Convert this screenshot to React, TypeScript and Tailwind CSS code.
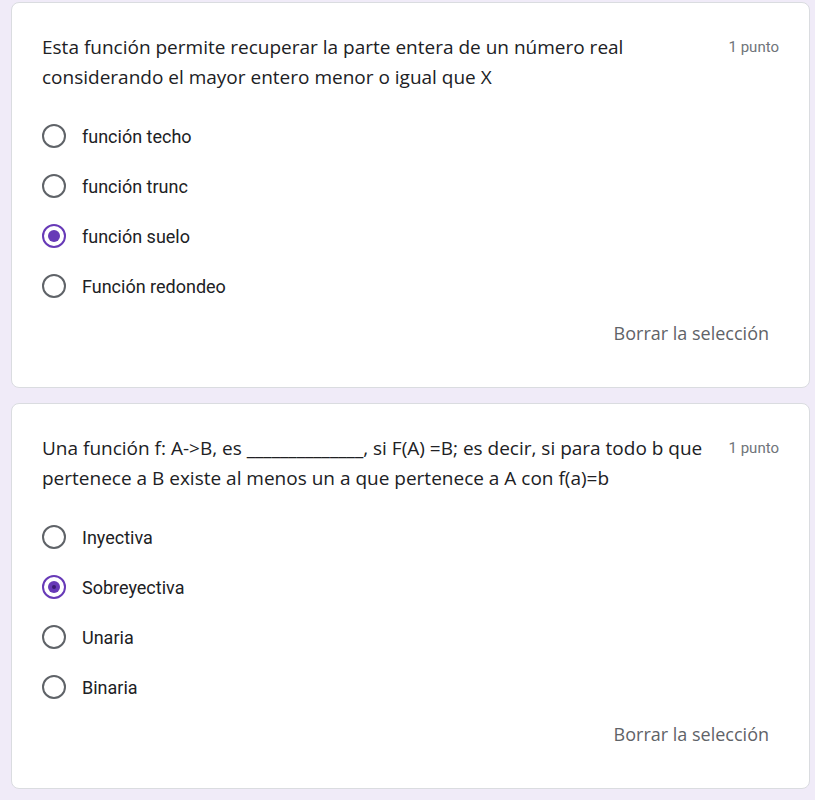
import React from 'react';

interface Question { id: string; title: string; options: string[]; selected: number; dot: 'full' | 'small'; }

const QUESTIONS: Question[] = [
  {
    id: 'q1',
    title: 'Esta función permite recuperar la parte entera de un número real considerando el mayor entero menor o igual que X',
    options: ['función techo', 'función trunc', 'función suelo', 'Función redondeo'],
    selected: 2,
    dot: 'full',
  },
  {
    id: 'q2',
    title: 'Una función f: A->B, es ______________, si F(A) =B; es decir, si para todo b que pertenece a B existe al menos un a que pertenece a A con f(a)=b',
    options: ['Inyectiva', 'Sobreyectiva', 'Unaria', 'Binaria'],
    selected: 1,
    dot: 'small',
  },
];

function Radio({ checked, dot }: { checked: boolean; dot: 'full' | 'small' }) {
  if (!checked) return <div className="w-6 h-6 rounded-full border-2 border-[#5f6368] flex-shrink-0" />;
  return (
    <div className="w-6 h-6 rounded-full border-2 border-[#673ab7] flex-shrink-0 flex items-center justify-center">
      {dot === 'full' ? (
        <div className="w-3 h-3 rounded-full bg-[#673ab7]" />
      ) : (
        <div className="w-3 h-3 rounded-full bg-[#673ab7] flex items-center justify-center"><div className="w-1 h-1 rounded-full bg-[#3b1d73]" /></div>
      )}
    </div>
  );
}

export default function App() {
  return (
    <div className="min-h-[800px] bg-[#f0ebf8] pt-[2px] pl-[11px] pr-[5px] flex flex-col gap-[15px]">
      {QUESTIONS.map(q => (
        <div key={q.id} className="bg-white rounded-lg border border-[#dadce0] pl-[30px] pr-[30px] pt-[29px] pb-[42px]">
          <div className="flex items-start justify-between gap-3">
            <p className="text-[19px] leading-[30px] text-[#202124] max-w-[682px]" style={{ fontFamily: '"Open Sans", sans-serif' }}>{q.title}</p>
            <span className="text-[15px] leading-[30px] text-[#70757a] whitespace-nowrap" style={{ fontFamily: 'Roboto, sans-serif' }}>1 punto</span>
          </div>
          <div className="mt-[32px] flex flex-col gap-[26px]">
            {q.options.map((opt, i) => (
              <div key={opt} className="flex items-center gap-4 h-6">
                <Radio checked={i === q.selected} dot={q.dot} />
                <span className="text-[18px] text-[#202124]" style={{ fontFamily: 'Roboto, sans-serif' }}>{opt}</span>
              </div>
            ))}
          </div>
          <div className="flex justify-end mt-[23px] pr-[10px]">
            <span className="text-[18px] leading-6 font-medium text-[#5f6368]" style={{ fontFamily: '"Open Sans", sans-serif' }}>Borrar la selección</span>
          </div>
        </div>
      ))}
    </div>
  );
}
